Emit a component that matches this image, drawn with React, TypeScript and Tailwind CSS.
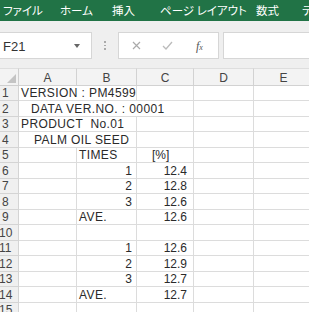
import React from 'react';

const tabs = [
  { label: 'ファイル', w: 'w-[57px]' },
  { label: 'ホーム', w: 'w-[52px]' },
  { label: '挿入', w: 'w-[48px]' },
  { label: 'ページ レイアウト', w: 'w-[96px]' },
  { label: '数式', w: 'w-[46px]' },
  { label: 'データ', w: 'w-[60px]' },
];

type Row = { a?: string; aSpan?: number; aPad?: string; b?: string; bRight?: boolean; c?: string; cRight?: boolean; cPad?: string };

const rows: Row[] = [
  { a: 'VERSION : PM4599', aSpan: 2, aPad: 'pl-[2px]' },
  { a: 'DATA VER.NO. : 00001', aSpan: 3, aPad: 'pl-[12px]' },
  { a: 'PRODUCT  No.01', aSpan: 2, aPad: 'pl-[2px]' },
  { a: 'PALM OIL SEED', aSpan: 2, aPad: 'pl-[15px]' },
  { b: 'TIMES', c: '[%]', cPad: 'pl-[15px]' },
  { b: '1', bRight: true, c: '12.4', cRight: true },
  { b: '2', bRight: true, c: '12.8', cRight: true },
  { b: '3', bRight: true, c: '12.6', cRight: true },
  { b: 'AVE.', c: '12.6', cRight: true },
  {},
  { b: '1', bRight: true, c: '12.6', cRight: true },
  { b: '2', bRight: true, c: '12.9', cRight: true },
  { b: '3', bRight: true, c: '12.7', cRight: true },
  { b: 'AVE.', c: '12.7', cRight: true },
  {},
];

const cell = 'border-r border-b border-[#dcdcdc] bg-white flex items-end pb-[1px] leading-[12px] whitespace-pre';
const word = 'tracking-[0.4px]';

const App: React.FC = () => {
  return (
    <div className="w-[309px] h-[312px] overflow-hidden bg-[#efefef] font-['Liberation_Sans','Noto_Sans_CJK_JP',sans-serif] text-[#2a2a2a]">
      {/* Ribbon tabs */}
      <div className="h-[21px] bg-[#217346] flex items-center pl-[3px] pt-[1px] text-white text-[11.5px] font-['Noto_Sans_CJK_JP',sans-serif] [font-feature-settings:'palt'] whitespace-nowrap">
        {tabs.map((t) => (
          <span key={t.label} className={`${t.w} shrink-0`}>{t.label}</span>
        ))}
      </div>

      {/* Formula bar */}
      <div className="h-[47px] pt-[11px] flex items-start">
        <div className="w-[92px] h-[27px] bg-white border border-l-0 border-[#d6d6d6] flex items-center justify-between pl-[3px] pr-[11px] shrink-0">
          <span className="text-[13px] text-[#333] pt-[3px]">F21</span>
          <svg width="6" height="4" viewBox="0 0 6 4"><path d="M0 0h6L3 4z" fill="#666" /></svg>
        </div>
        <div className="w-[26px] h-[27px] flex items-center justify-center shrink-0">
          <div className="flex flex-col gap-[2px]">
            <span className="w-[1.5px] h-[1.5px] bg-[#aaa]" />
            <span className="w-[1.5px] h-[1.5px] bg-[#aaa]" />
            <span className="w-[1.5px] h-[1.5px] bg-[#aaa]" />
          </div>
        </div>
        <div className="w-[101px] h-[27px] bg-white border border-[#d6d6d6] flex items-center shrink-0">
          <svg className="ml-[13px]" width="9" height="9" viewBox="0 0 9 9"><path d="M1 1l7 7M8 1L1 8" stroke="#aaa" strokeWidth="1.2" /></svg>
          <svg className="ml-[21px]" width="11" height="9" viewBox="0 0 11 9"><path d="M1 5l3 3 6-7" stroke="#bbb" strokeWidth="1.3" fill="none" /></svg>
          <span className="ml-[23px] font-['Liberation_Serif',serif] italic text-[12px] text-[#555] leading-none">f<span className="text-[8px]">x</span></span>
        </div>
        <div className="ml-[4px] flex-1 h-[27px] bg-white border border-r-0 border-[#d6d6d6]" />
      </div>

      {/* Sheet grid */}
      <div className="grid grid-cols-[19px_58px_60px_57px_60px_60px] grid-rows-[17.5px] auto-rows-[15.5px] text-[12px]">
        {/* header row */}
        <div className="bg-[#f3f3f3] border-r border-b border-[#cfcfcf] border-t border-t-[#dedede] relative">
          <svg className="absolute right-[2px] bottom-[2px]" width="9" height="9" viewBox="0 0 9 9"><path d="M9 0V9H0z" fill="#c4c4c4" /></svg>
        </div>
        {['A', 'B', 'C', 'D', 'E'].map((l) => (
          <div key={l} className="bg-[#f3f3f3] border-r border-b border-[#d2d2d2] border-t border-t-[#dedede] flex items-end justify-center pb-[1px] leading-[12px] text-[#444] text-[12px]">
            {l}
          </div>
        ))}

        {rows.map((r, i) => {
          const n = i + 1;
          const span = r.aSpan ?? 1;
          const spanCls = span === 3 ? 'col-span-3' : span === 2 ? 'col-span-2' : '';
          return (
            <React.Fragment key={n}>
              <div className="bg-[#f0f0f0] border-r border-b border-[#d4d4d4] flex items-end pb-[1px] leading-[12px] text-[#444] text-[12px] overflow-hidden">
                <span className={n >= 10 ? '-ml-[1px]' : 'pl-[2px]'}>{n}</span>
              </div>
              <div className={`${cell} ${spanCls} ${r.aPad ?? ''} ${word}`}>{r.a ?? ''}</div>
              {span < 2 && (
                <div className={`${cell} ${r.bRight ? 'justify-end pr-[4px]' : `pl-[2px] ${word}`}`}>{r.b ?? ''}</div>
              )}
              {span < 3 && (
                <div className={`${cell} ${r.cRight ? 'justify-end pr-[6px]' : r.cPad ?? 'pl-[2px]'}`}>{r.c ?? ''}</div>
              )}
              <div className={cell} />
              <div className={cell} />
            </React.Fragment>
          );
        })}
      </div>
    </div>
  );
};

export default App;
